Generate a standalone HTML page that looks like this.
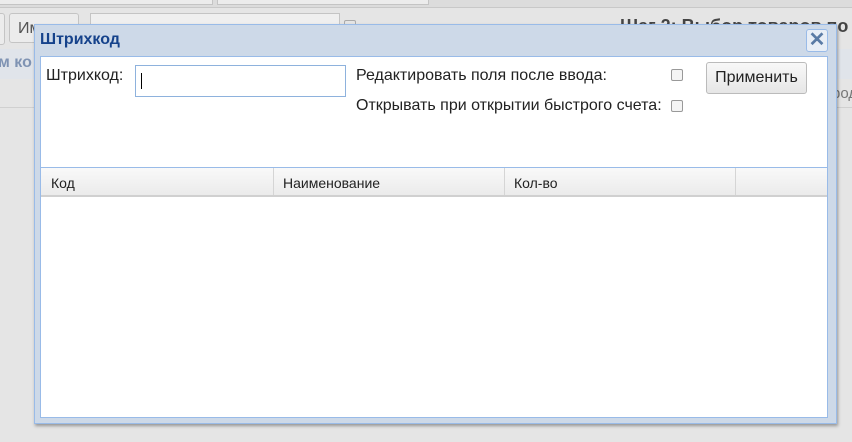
<!DOCTYPE html>
<html><head><meta charset="utf-8"><style>
body{margin:0;width:852px;height:442px;background:#e5e5e5;position:relative;overflow:hidden;font-family:"Liberation Sans",Arial,sans-serif;}
.a{position:absolute}
</style></head><body>
<div class="a" style="left:0;top:0;width:852px;height:7px;background:#dcdcdc;border-bottom:1px solid #c8c8c8"></div>
<div class="a" style="left:-5px;top:0;width:216px;height:4px;border:1px solid #c4c4c4;border-top:0;background:#ececec"></div>
<div class="a" style="left:217px;top:0;width:210px;height:4px;border:1px solid #c4c4c4;border-top:0;background:#ececec"></div>
<div class="a" style="left:-5px;top:13px;width:8px;height:30px;border:1px solid #c4c4c4;border-radius:3px;background:#ececec"></div>
<div class="a" style="left:9px;top:13px;width:70px;height:30px;border:1px solid #c4c4c4;border-radius:3px;background:#ececec;font-size:16px;color:#555;line-height:30px;padding-left:8px;box-sizing:border-box">Им</div>
<div class="a" style="left:90px;top:13px;width:248px;height:26px;border:1px solid #c4c4c4;background:#efefef"></div>
<div class="a" style="left:344px;top:20px;width:10px;height:10px;border:1px solid #aaa;border-radius:2px"></div>
<div class="a" style="left:620px;top:16px;font-size:18px;font-weight:bold;color:#444">Шаг 2: Выбор товаров по</div>
<div class="a" style="left:0;top:49px;width:852px;height:30px;background:#e0e4ea"></div>
<div class="a" style="left:-2px;top:54px;font-size:16px;font-weight:bold;color:#7f93b3">м ко</div>
<div class="a" style="left:0;top:79px;width:852px;height:28px;border-bottom:1px solid #d0d0d0"></div>
<div class="a" style="left:832px;top:85px;font-size:15px;color:#777">род</div>
<!-- dialog -->
<div class="a" style="left:34px;top:24px;width:801px;height:398px;background:#cdd9e8;border:1px solid #99bbe8;box-shadow:1px 2px 3px rgba(0,0,0,.35)"></div>
<div class="a" style="left:40px;top:31px;font-size:16px;font-weight:bold;color:#15428b">Штрихкод</div>
<div class="a" style="left:806px;top:29px;width:20px;height:21px;border:1px solid #99bbe8;border-radius:3px;background:#e8eef6;color:#5a7ba5;font-size:20px;font-weight:bold;text-align:center;line-height:20px">✕</div>
<div class="a" style="left:40px;top:56px;width:786px;height:360px;background:#fff;border:1px solid #99bbe8"></div>
<div class="a" style="left:46px;top:67px;font-size:16px;color:#222">Штрихкод:</div>
<div class="a" style="left:135px;top:65px;width:209px;height:30px;border:1px solid #8eb2dd;background:#fff"></div>
<div class="a" style="left:141px;top:73px;width:1px;height:16px;background:#000"></div>
<div class="a" style="left:356px;top:67px;font-size:16px;color:#222">Редактировать поля после ввода:</div>
<div class="a" style="left:356px;top:97px;font-size:16px;color:#222">Открывать при открытии быстрого счета:</div>
<div class="a" style="left:671px;top:69px;width:10px;height:10px;border:1px solid #999;border-radius:2px;background:#f4f4f4"></div>
<div class="a" style="left:671px;top:100px;width:10px;height:10px;border:1px solid #999;border-radius:2px;background:#f4f4f4"></div>
<div class="a" style="left:706px;top:62px;width:99px;height:30px;border:1px solid #bbb;border-radius:3px;background:linear-gradient(#f8f8f8,#e6e6e6);font-size:16px;color:#222;text-align:center;line-height:29px">Применить</div>
<div class="a" style="left:41px;top:167px;width:786px;height:1px;background:#99bbe8"></div>
<div class="a" style="left:41px;top:168px;width:786px;height:27px;background:linear-gradient(#f9f9f9,#ebebeb);border-bottom:2px solid #d0d0d0;font-size:14px;color:#222;line-height:30px">
<span class="a" style="left:10px">Код</span>
<span class="a" style="left:232px;top:0;width:1px;height:27px;background:#d5d5d5"></span>
<span class="a" style="left:242px">Наименование</span>
<span class="a" style="left:463px;top:0;width:1px;height:27px;background:#d5d5d5"></span>
<span class="a" style="left:473px">Кол-во</span>
<span class="a" style="left:694px;top:0;width:1px;height:27px;background:#d5d5d5"></span>
</div>
</body></html>
